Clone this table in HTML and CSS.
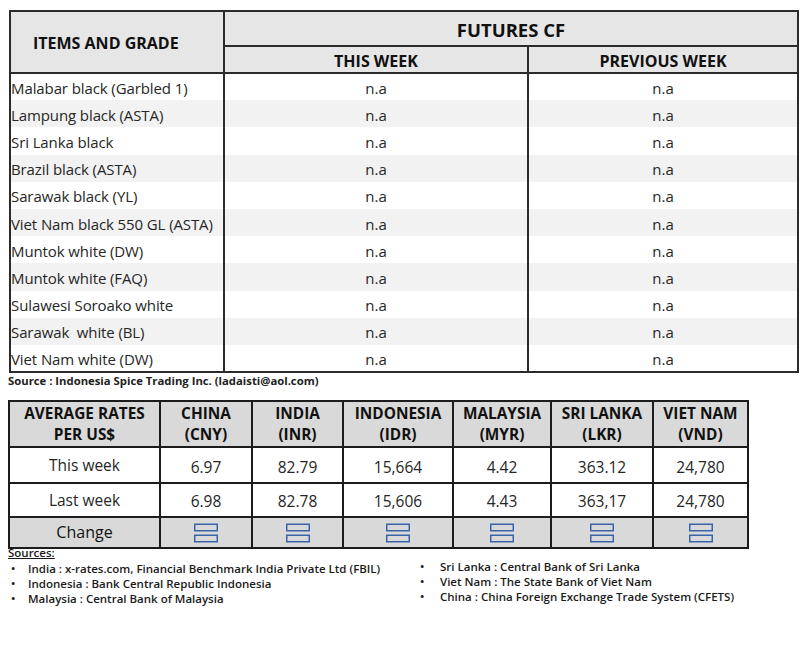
FILE: index.html
```html
<!DOCTYPE html>
<html>
<head>
<meta charset="utf-8">
<link rel="stylesheet" href="styles.css">
</head>
<body>
<div class="page">
  <table class="fut">
    <colgroup>
      <col class="fc1"><col class="fc2"><col class="fc3">
    </colgroup>
    <thead>
      <tr class="h1">
        <th rowspan="2" class="items">ITEMS AND GRADE</th>
        <th colspan="2" class="futures">FUTURES CF</th>
      </tr>
      <tr class="h2">
        <th>THIS WEEK</th>
        <th>PREVIOUS WEEK</th>
      </tr>
    </thead>
    <tbody>
      <tr><td>Malabar black (Garbled 1)</td><td>n.a</td><td>n.a</td></tr>
      <tr><td>Lampung black (ASTA)</td><td>n.a</td><td>n.a</td></tr>
      <tr><td>Sri Lanka black</td><td>n.a</td><td>n.a</td></tr>
      <tr><td>Brazil black (ASTA)</td><td>n.a</td><td>n.a</td></tr>
      <tr><td>Sarawak black (YL)</td><td>n.a</td><td>n.a</td></tr>
      <tr><td>Viet Nam black 550 GL (ASTA)</td><td>n.a</td><td>n.a</td></tr>
      <tr><td>Muntok white (DW)</td><td>n.a</td><td>n.a</td></tr>
      <tr><td>Muntok white (FAQ)</td><td>n.a</td><td>n.a</td></tr>
      <tr><td>Sulawesi Soroako white</td><td>n.a</td><td>n.a</td></tr>
      <tr><td>Sarawak&nbsp; white (BL)</td><td>n.a</td><td>n.a</td></tr>
      <tr><td>Viet Nam white (DW)</td><td>n.a</td><td>n.a</td></tr>
    </tbody>
  </table>
  <p class="source">Source : Indonesia Spice Trading Inc. (ladaisti@aol.com)</p>

  <table class="rates">
    <colgroup>
      <col class="r1"><col class="r2"><col class="r3"><col class="r4"><col class="r5"><col class="r6"><col class="r7">
    </colgroup>
    <thead>
      <tr class="rh">
        <th>AVERAGE RATES<br>PER US$</th>
        <th>CHINA<br>(CNY)</th>
        <th>INDIA<br>(INR)</th>
        <th>INDONESIA<br>(IDR)</th>
        <th>MALAYSIA<br>(MYR)</th>
        <th>SRI LANKA<br>(LKR)</th>
        <th>VIET NAM<br>(VND)</th>
      </tr>
    </thead>
    <tbody>
      <tr class="tw">
        <td class="lbl">This week</td><td>6.97</td><td>82.79</td><td>15,664</td><td>4.42</td><td>363.12</td><td>24,780</td>
      </tr>
      <tr class="lw">
        <td class="lbl">Last week</td><td>6.98</td><td>82.78</td><td>15,606</td><td>4.43</td><td>363,17</td><td>24,780</td>
      </tr>
      <tr class="chg">
        <td class="lbl">Change</td>
        <td><svg class="eq" width="26" height="20" viewBox="0 0 26 20"><rect x="1.75" y="1.25" width="22.5" height="6.5"/><rect x="1.75" y="12.25" width="22.5" height="6.5"/></svg></td>
        <td><svg class="eq" width="26" height="20" viewBox="0 0 26 20"><rect x="1.75" y="1.25" width="22.5" height="6.5"/><rect x="1.75" y="12.25" width="22.5" height="6.5"/></svg></td>
        <td><svg class="eq" width="26" height="20" viewBox="0 0 26 20"><rect x="1.75" y="1.25" width="22.5" height="6.5"/><rect x="1.75" y="12.25" width="22.5" height="6.5"/></svg></td>
        <td><svg class="eq" width="26" height="20" viewBox="0 0 26 20"><rect x="1.75" y="1.25" width="22.5" height="6.5"/><rect x="1.75" y="12.25" width="22.5" height="6.5"/></svg></td>
        <td><svg class="eq" width="26" height="20" viewBox="0 0 26 20"><rect x="1.75" y="1.25" width="22.5" height="6.5"/><rect x="1.75" y="12.25" width="22.5" height="6.5"/></svg></td>
        <td><svg class="eq" width="26" height="20" viewBox="0 0 26 20"><rect x="1.75" y="1.25" width="22.5" height="6.5"/><rect x="1.75" y="12.25" width="22.5" height="6.5"/></svg></td>
      </tr>
    </tbody>
  </table>

  <div class="sources">
    <div class="scol left">
      <div class="stitle">Sources:</div>
      <ul>
        <li><span class="b">•</span>India : x-rates.com, Financial Benchmark India Private Ltd (FBIL)</li>
        <li><span class="b">•</span>Indonesia : Bank Central Republic Indonesia</li>
        <li><span class="b">•</span>Malaysia : Central Bank of Malaysia</li>
      </ul>
    </div>
    <div class="scol right">
      <ul>
        <li><span class="b">•</span>Sri Lanka : Central Bank of Sri Lanka</li>
        <li><span class="b">•</span>Viet Nam : The State Bank of Viet Nam</li>
        <li><span class="b">•</span>China : China Foreign Exchange Trade System (CFETS)</li>
      </ul>
    </div>
  </div>
</div>
</body>
</html>
```

FILE: styles.css
```css
html, body {
  margin: 0;
  padding: 0;
  background: #ffffff;
}
body {
  font-family: "Open Sans", "Noto Sans", "Liberation Sans", sans-serif;
  color: #1e1e1e;
}
.page {
  padding: 10px 0 0 8px;
}

/* Futures table */
.fut {
  border-collapse: collapse;
  table-layout: fixed;
  width: 788px;
  margin-left: 1px;
}
.fc1 { width: 214px; }
.fc2 { width: 304px; }
.fc3 { width: 270px; }
.fut th, .fut td {
  border: 2px solid #2b2b2b;
  padding: 0;
}
.fut th {
  background: #e7e6e6;
  font-weight: 700;
  font-size: 16px;
  color: #111;
}
.fut th.items {
  text-align: left;
  padding-left: 22px;
}
.fut th.futures {
  font-size: 18.5px;
}
.fut .h1 { height: 35px; }
.fut .h1 th:first-child { padding-top: 2px; }
.fut .h1 th:last-child { padding-top: 2px; }
.fut .h2 { height: 27px; }
.fut .h2 th { padding-top: 3px; }
.fut tbody tr { height: 27.2px; }
.fut tbody td {
  font-size: 15px;
  text-align: center;
  padding-top: 2px;
  color: #262626;
  border-top: none;
  border-bottom: none;
  line-height: 20px;
}
.fut tbody td:first-child {
  text-align: left;
  padding-left: 0;
  letter-spacing: -0.1px;
}
.fut tbody tr:nth-child(even) td { background: #f2f2f2; }
.fut tbody tr:last-child td { border-bottom: 2px solid #2b2b2b; }

.source {
  margin: 0;
  padding-top: 1px;
  font-size: 11.3px;
  font-weight: 700;
  line-height: 14px;
  color: #222;
}

/* Rates table */
.rates {
  border-collapse: collapse;
  table-layout: fixed;
  width: 739px;
  margin-top: 12px;
}
.r1 { width: 151px; }
.r2 { width: 92px; }
.r3 { width: 91px; }
.r4 { width: 110px; }
.r5 { width: 98px; }
.r6 { width: 102px; }
.r7 { width: 95px; }
.rates th, .rates td {
  border: 2.5px solid #1c1c1c;
  padding: 0;
  text-align: center;
}
.rates th {
  background: #d9d9d9;
  font-size: 15.4px;
  font-weight: 700;
  line-height: 21px;
  color: #111;
}
.rates .rh { height: 46px; }
.rates td {
  font-size: 15.5px;
  color: #262626;
  line-height: 20px;
}
.rates .tw { height: 36px; }
.rates .tw td { padding-top: 3px; }
.rates .tw td.lbl { padding-top: 0; }
.rates .lw { height: 34px; }
.rates .lw td { padding-top: 2px; }
.rates .lw td.lbl { padding-top: 0; }
.rates .chg { height: 31px; }
.rates .chg td { background: #d9d9d9; }
.rates .chg td.lbl { font-size: 16px; color: #111; padding-bottom: 2px; }
.eq {
  display: block;
  margin: 0 auto;
}
.eq rect {
  fill: none;
  stroke: #3a64a8;
  stroke-width: 1.5;
}

/* Sources */
.sources {
  display: flex;
  margin-top: -4px;
  font-size: 11.5px;
  font-weight: 600;
  line-height: 15px;
  color: #1a1a1a;
}
.scol ul {
  list-style: none;
  margin: 0;
  padding: 0;
}
.scol li {
  display: flex;
}
.left { width: 412px; }
.right { margin-top: 14px; }
.stitle {
  text-decoration: underline;
  margin-bottom: 1px;
}
.b {
  display: inline-block;
  width: 20px;
  padding-left: 3px;
  box-sizing: border-box;
}
.right .b { padding-left: 0; }
```
